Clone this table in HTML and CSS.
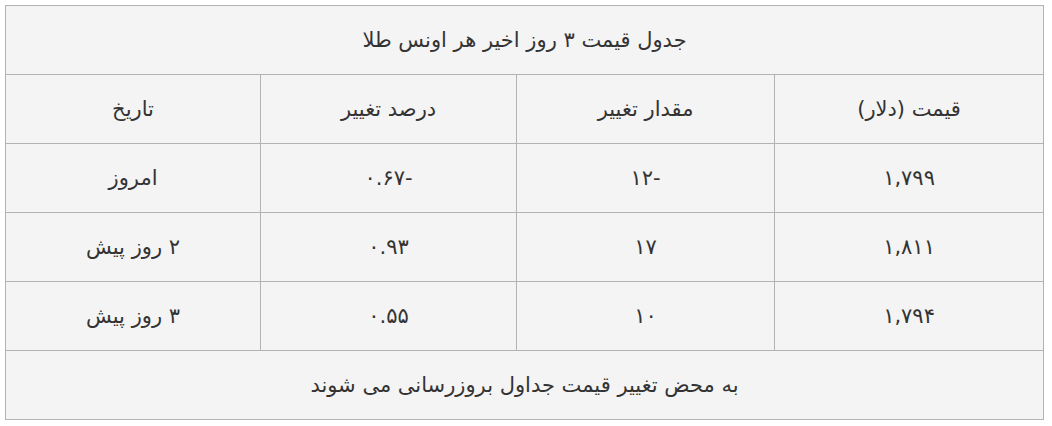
FILE: index.html
```html
<!DOCTYPE html>
<html lang="fa">
<head>
<meta charset="utf-8">
<link rel="stylesheet" href="styles.css">
</head>
<body>
<table class="price-table" dir="rtl">
  <colgroup>
    <col class="c1"><col class="c2"><col class="c3"><col class="c4">
  </colgroup>
  <tr><td class="caption-cell" colspan="4">جدول قیمت ۳ روز اخیر هر اونس طلا</td></tr>
  <tr><td>قیمت (دلار)</td><td>مقدار تغییر</td><td>درصد تغییر</td><td>تاریخ</td></tr>
  <tr><td>۱,۷۹۹</td><td>-۱۲</td><td>-۰.۶۷</td><td>امروز</td></tr>
  <tr><td>۱,۸۱۱</td><td>۱۷</td><td>۰.۹۳</td><td>۲ روز پیش</td></tr>
  <tr><td>۱,۷۹۴</td><td>۱۰</td><td>۰.۵۵</td><td>۳ روز پیش</td></tr>
  <tr><td colspan="4">به محض تغییر قیمت جداول بروزرسانی می شوند</td></tr>
</table>
</body>
</html>
```
FILE: styles.css
```css
html, body {
  background: #ffffff;
}
body {
  margin: 5px;
  font-family: "DejaVu Sans", sans-serif;
  color: #333333;
}
.price-table {
  width: 1039px;
  border-collapse: collapse;
  table-layout: fixed;
  background: #f4f4f4;
  border: 1px solid #b3b3b3;
}
.c1 { width: 269px; }
.c2 { width: 258px; }
.c3 { width: 256px; }
.c4 { width: 255px; }
.price-table td {
  border: 1px solid #b3b3b3;
  height: 68px;
  padding: 0;
  text-align: center;
  vertical-align: middle;
  font-size: 21px;
  line-height: 1;
}
```
